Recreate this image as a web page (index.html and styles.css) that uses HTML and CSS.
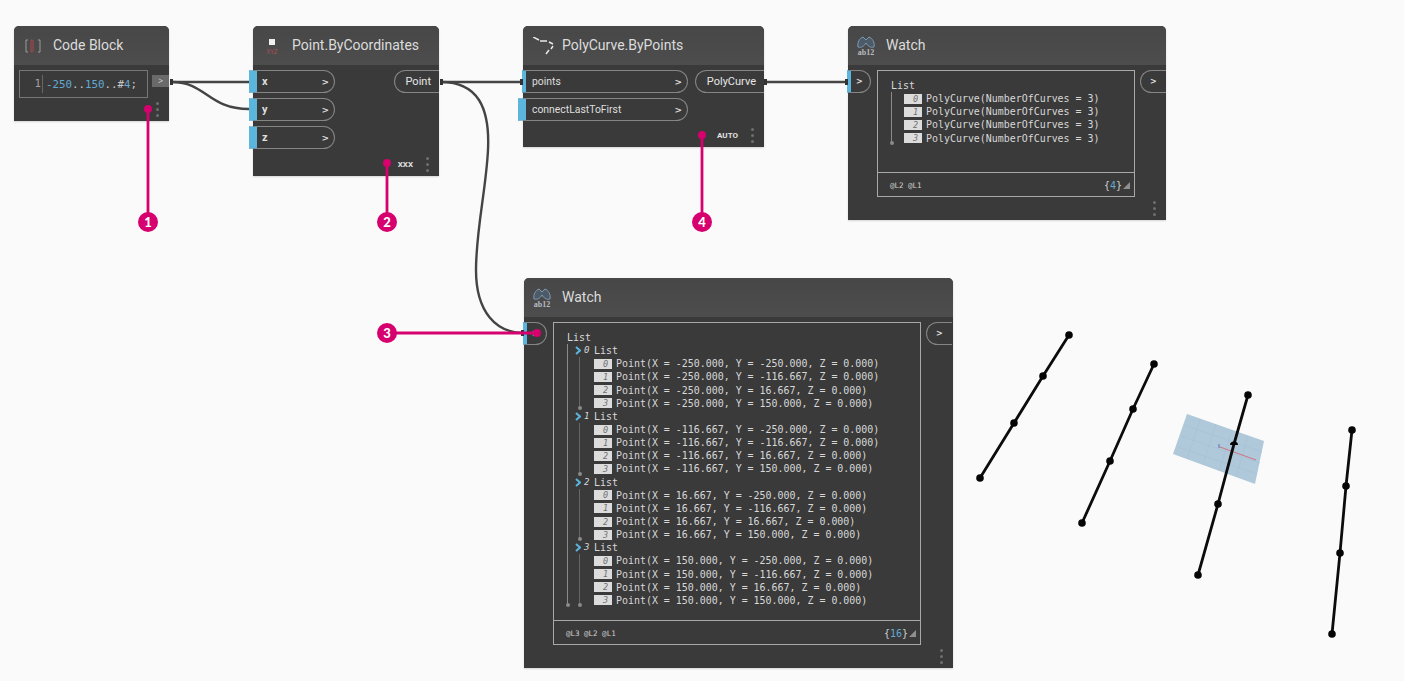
FILE: index.html
```html
<!DOCTYPE html>
<html lang="en">

<head>
    <meta charset="UTF-8" />
    <title>PolyCurve.ByPoints graph</title>
    <link rel="stylesheet" href="styles.css">
</head>

<body>
    <div class="canvas">

        <!-- background preview geometry -->
        <svg class="layer" width="1404" height="681" viewBox="0 0 1404 681">
            <polygon class="plane" points="1187,414 1264,441 1255,484 1173,454" />
            <path class="plane-grid" d="M1184,425 L1262,452 M1181,436 L1260,463 M1178,447 L1257,474 M1200,419 L1187,459 M1216,424 L1203,465 M1232,430 L1219,471 M1248,436 L1236,477" />
            <line class="axis-red" x1="1220" y1="447" x2="1256" y2="460" />
            <line class="axis-blue" x1="1219" y1="444" x2="1219" y2="448" />
            <polyline class="curve" points="1069,335 1043,376 1014,423 980,478" />
            <circle class="vertex" cx="1069" cy="335" r="3.8" /><circle class="vertex" cx="1043" cy="376" r="3.8" />
            <circle class="vertex" cx="1014" cy="423" r="3.8" /><circle class="vertex" cx="980" cy="478" r="3.8" />
            <polyline class="curve" points="1154,364 1133,409 1110,461 1082,523" />
            <circle class="vertex" cx="1154" cy="364" r="3.8" /><circle class="vertex" cx="1133" cy="409" r="3.8" />
            <circle class="vertex" cx="1110" cy="461" r="3.8" /><circle class="vertex" cx="1082" cy="523" r="3.8" />
            <polyline class="curve" points="1248,395 1234,444 1218,504 1198,575" />
            <circle class="vertex" cx="1248" cy="395" r="3.8" /><path class="vertex" d="M1230,445 A4,3.5 0 0 1 1238,445 Z" />
            <circle class="vertex" cx="1218" cy="504" r="3.8" /><circle class="vertex" cx="1198" cy="575" r="3.8" />
            <polyline class="curve" points="1352,430 1346,486 1340,553 1332,634" />
            <circle class="vertex" cx="1352" cy="430" r="3.8" /><circle class="vertex" cx="1346" cy="486" r="3.8" />
            <circle class="vertex" cx="1340" cy="553" r="3.8" /><circle class="vertex" cx="1332" cy="634" r="3.8" />
        </svg>

        <div class="node node-code">
            <div class="node-head">
                <svg class="icon-code" width="16" height="14" viewBox="0 0 16 14">
                    <path class="ic-grey" d="M3,1 H1 V13 H3 M13,1 H15 V13 H13" />
                    <path class="ic-red" d="M7.5,1 H6 V13 H7.5 M8,1 V13" />
                </svg>
                <span class="node-title">Code Block</span>
            </div>
            <div class="node-body">
                <div class="code-box">
                    <span class="line-no">1</span>
                    <span class="code-text"><b>-250</b>..<b>150</b>..#<b>4</b>;</span>
                </div>
                <div class="code-out">&gt;</div>
            </div>
            <div class="node-foot"><span class="grip"><i></i><i></i><i></i></span></div>
        </div>

        <div class="node node-point">
            <div class="node-head">
                <div class="icon-point"><i></i><span>XYZ</span></div>
                <span class="node-title">Point.ByCoordinates</span>
            </div>
            <div class="node-body split">
                <div class="inputs">
                    <div class="in-port"><span>x</span><em>&gt;</em></div>
                    <div class="in-port"><span>y</span><em>&gt;</em></div>
                    <div class="in-port"><span>z</span><em>&gt;</em></div>
                </div>
                <div class="out-port">Point</div>
            </div>
            <div class="node-foot"><span class="lacing">XXX</span><span class="grip"><i></i><i></i><i></i></span></div>
        </div>

        <div class="node node-poly">
            <div class="node-head">
                <svg class="icon-poly" width="22" height="18" viewBox="0 0 22 18">
                    <path class="ic-dash" d="M0,0 L6,3 M7,4 H14 M16,5 L20,7 M20,9 L18,12 M16,13 L13,17" />
                </svg>
                <span class="node-title">PolyCurve.ByPoints</span>
            </div>
            <div class="node-body split">
                <div class="inputs">
                    <div class="in-port in-short"><span>points</span><em>&gt;</em></div>
                    <div class="in-port in-long"><span>connectLastToFirst</span><em>&gt;</em></div>
                </div>
                <div class="out-port">PolyCurve</div>
            </div>
            <div class="node-foot"><span class="lacing">AUTO</span><span class="grip"><i></i><i></i><i></i></span></div>
        </div>

        <div class="node node-watch-top">
            <div class="node-head">
                <div class="icon-watch">
                    <svg width="18" height="13" viewBox="0 0 18 13">
                        <path class="ic-blue" d="M1,11 C0,6 3,2 6,1 L9,4 L12,1 C15,2 18,6 17,11 C13,12 11,10 9,7 C7,10 5,12 1,11 Z" />
                    </svg>
                    <span>ab12</span>
                </div>
                <span class="node-title">Watch</span>
            </div>
            <div class="node-body watch-body">
                <div class="watch-in">&gt;</div>
                <div class="watch-box">
                    <div class="watch-list">
                        <div class="list-title">List</div>
                        <div class="tree">
                            <div class="row"><span class="tag">0</span>PolyCurve(NumberOfCurves = 3)</div>
                            <div class="row"><span class="tag">1</span>PolyCurve(NumberOfCurves = 3)</div>
                            <div class="row"><span class="tag">2</span>PolyCurve(NumberOfCurves = 3)</div>
                            <div class="row"><span class="tag">3</span>PolyCurve(NumberOfCurves = 3)</div>
                        </div>
                    </div>
                    <div class="watch-foot">
                        <span class="levels">@L2 @L1</span>
                        <span class="count">{<b>4</b>}<i class="resize"></i></span>
                    </div>
                </div>
                <div class="watch-out">&gt;</div>
            </div>
            <div class="node-foot"><span class="grip"><i></i><i></i><i></i></span></div>
        </div>

        <div class="node node-watch-big">
            <div class="node-head">
                <div class="icon-watch">
                    <svg width="18" height="13" viewBox="0 0 18 13">
                        <path class="ic-blue" d="M1,11 C0,6 3,2 6,1 L9,4 L12,1 C15,2 18,6 17,11 C13,12 11,10 9,7 C7,10 5,12 1,11 Z" />
                    </svg>
                    <span>ab12</span>
                </div>
                <span class="node-title">Watch</span>
            </div>
            <div class="node-body watch-body">
                <div class="watch-in">&gt;</div>
                <div class="watch-box">
                    <div class="watch-list">
                        <div class="list-title">List</div>
                        <div class="tree tree-outer">
                            <div class="sub-title"><svg class="chev" width="6" height="9" viewBox="0 0 6 9"><path d="M1,1 L5,4.5 L1,8" /></svg><i>0</i>List</div>
                            <div class="tree tree-inner">
                                <div class="row"><span class="tag">0</span>Point(X = -250.000, Y = -250.000, Z = 0.000)</div>
                                <div class="row"><span class="tag">1</span>Point(X = -250.000, Y = -116.667, Z = 0.000)</div>
                                <div class="row"><span class="tag">2</span>Point(X = -250.000, Y = 16.667, Z = 0.000)</div>
                                <div class="row"><span class="tag">3</span>Point(X = -250.000, Y = 150.000, Z = 0.000)</div>
                            </div>
                            <div class="sub-title"><svg class="chev" width="6" height="9" viewBox="0 0 6 9"><path d="M1,1 L5,4.5 L1,8" /></svg><i>1</i>List</div>
                            <div class="tree tree-inner">
                                <div class="row"><span class="tag">0</span>Point(X = -116.667, Y = -250.000, Z = 0.000)</div>
                                <div class="row"><span class="tag">1</span>Point(X = -116.667, Y = -116.667, Z = 0.000)</div>
                                <div class="row"><span class="tag">2</span>Point(X = -116.667, Y = 16.667, Z = 0.000)</div>
                                <div class="row"><span class="tag">3</span>Point(X = -116.667, Y = 150.000, Z = 0.000)</div>
                            </div>
                            <div class="sub-title"><svg class="chev" width="6" height="9" viewBox="0 0 6 9"><path d="M1,1 L5,4.5 L1,8" /></svg><i>2</i>List</div>
                            <div class="tree tree-inner">
                                <div class="row"><span class="tag">0</span>Point(X = 16.667, Y = -250.000, Z = 0.000)</div>
                                <div class="row"><span class="tag">1</span>Point(X = 16.667, Y = -116.667, Z = 0.000)</div>
                                <div class="row"><span class="tag">2</span>Point(X = 16.667, Y = 16.667, Z = 0.000)</div>
                                <div class="row"><span class="tag">3</span>Point(X = 16.667, Y = 150.000, Z = 0.000)</div>
                            </div>
                            <div class="sub-title"><svg class="chev" width="6" height="9" viewBox="0 0 6 9"><path d="M1,1 L5,4.5 L1,8" /></svg><i>3</i>List</div>
                            <div class="tree tree-inner">
                                <div class="row"><span class="tag">0</span>Point(X = 150.000, Y = -250.000, Z = 0.000)</div>
                                <div class="row"><span class="tag">1</span>Point(X = 150.000, Y = -116.667, Z = 0.000)</div>
                                <div class="row"><span class="tag">2</span>Point(X = 150.000, Y = 16.667, Z = 0.000)</div>
                                <div class="row"><span class="tag">3</span>Point(X = 150.000, Y = 150.000, Z = 0.000)</div>
                            </div>
                        </div>
                    </div>
                    <div class="watch-foot">
                        <span class="levels">@L3 @L2 @L1</span>
                        <span class="count">{<b>16</b>}<i class="resize"></i></span>
                    </div>
                </div>
                <div class="watch-out">&gt;</div>
            </div>
            <div class="node-foot"><span class="grip"><i></i><i></i><i></i></span></div>
        </div>

        <!-- wires and callouts sit over the nodes -->
        <svg class="layer" width="1404" height="681" viewBox="0 0 1404 681">
            <path class="wire" d="M172,82 H249" />
            <path class="wire" d="M172,82 C206,82 208,109 249,109" />
            <path class="wire" d="M441,82 H523" />
            <path class="wire" d="M441,82 C478,82 490,108 488,150 C486,190 476,230 476,270 C476,312 496,333 524,333" />
            <path class="wire" d="M766,82 H848" />
            <rect class="cap" x="170" y="79" width="3" height="6" />
            <rect class="cap" x="440" y="79" width="3" height="6" />
            <rect class="cap" x="764" y="79" width="3" height="6" />
            <rect class="cap" x="520" y="79" width="3" height="6" />
            <rect class="cap" x="845" y="79" width="3" height="6" />
            <rect class="cap" x="521" y="330" width="3" height="6" />

            <path class="call" d="M148,109 V222" />
            <path class="call" d="M387,163 V222" />
            <path class="call" d="M702,135 V222" />
            <path class="call" d="M387,333 H537" />
            <circle class="call-dot" cx="148" cy="109" r="4" />
            <circle class="call-dot" cx="387" cy="163" r="4" />
            <circle class="call-dot" cx="702" cy="135" r="4" />
            <circle class="call-dot" cx="537" cy="333" r="4" />
        </svg>

        <div class="badge badge-1">1</div>
        <div class="badge badge-2">2</div>
        <div class="badge badge-3">3</div>
        <div class="badge badge-4">4</div>
    </div>
</body>

</html>
```
FILE: styles.css
```css
body {
    margin: 0;
    background: #fafafa;
    font-family: "Open Sans", Arial, sans-serif;
}

.canvas {
    position: relative;
    width: 1404px;
    height: 681px;
    overflow: hidden;
}

.layer {
    position: absolute;
    left: 0;
    top: 0;
}

/* preview geometry */
.plane {
    fill: #afc9da;
}

.plane-grid {
    fill: none;
    stroke: #a3bfd2;
    stroke-width: 0.5;
}

.axis-red {
    stroke: #d0707e;
    stroke-width: 1;
}

.axis-blue {
    stroke: #5a6fc0;
    stroke-width: 1;
}

.curve {
    fill: none;
    stroke: #0c0c0c;
    stroke-width: 2.8;
}

.vertex {
    fill: #050505;
}

/* nodes */
.node {
    position: absolute;
    display: flex;
    flex-direction: column;
    background: #3a3a3a;
    border-radius: 5px 5px 0 0;
    box-shadow: 0 1px 2px rgba(0, 0, 0, 0.15);
}

.node-code {
    left: 14px;
    top: 26px;
    width: 155px;
    height: 95px;
}

.node-point {
    left: 253px;
    top: 26px;
    width: 186px;
    height: 150px;
}

.node-poly {
    left: 523px;
    top: 26px;
    width: 241px;
    height: 121px;
}

.node-watch-top {
    left: 848px;
    top: 26px;
    width: 318px;
    height: 194px;
}

.node-watch-big {
    left: 524px;
    top: 278px;
    width: 429px;
    height: 390px;
}

.node-head {
    display: flex;
    align-items: center;
    height: 39px;
    flex: none;
    box-sizing: border-box;
    padding-left: 9px;
    gap: 11px;
    background: linear-gradient(#474747, #4d4d4d);
    border-radius: 5px 5px 0 0;
}

.node-code .node-head {
    padding-left: 11px;
    gap: 12px;
}

.node-point .node-head {
    padding-left: 12px;
    gap: 13px;
}

.node-poly .node-head {
    padding-left: 10px;
    gap: 7px;
}

.node-title {
    padding-bottom: 2px;
    font-family: Roboto, Arial, sans-serif;
    font-size: 14px;
    color: #dcdcdc;
}

.node-body {
    display: flex;
    flex: 1;
    min-height: 0;
    padding-top: 5px;
}

.split {
    justify-content: space-between;
    align-items: flex-start;
}

.node-foot {
    display: flex;
    justify-content: flex-end;
    align-items: center;
    gap: 13px;
    flex: none;
    height: 23px;
    padding-right: 10px;
}

.grip {
    display: flex;
    flex-direction: column;
    gap: 3px;
}

.grip i {
    display: block;
    width: 3px;
    height: 3px;
    border-radius: 50%;
    background: #6f6f6f;
}

.lacing {
    font-family: Roboto, Arial, sans-serif;
    font-size: 8px;
    font-weight: 700;
    color: #e2e2e2;
}

/* icons */
.ic-grey {
    fill: none;
    stroke: #9a9a9a;
    stroke-width: 1;
}

.ic-red {
    fill: none;
    stroke: #a8474f;
    stroke-width: 1;
}

.ic-dash {
    fill: none;
    stroke: #e8e8e8;
    stroke-width: 1.5;
}

.ic-blue {
    fill: #4d5a68;
    stroke: #7f9ab4;
    stroke-width: 1;
}

.icon-point {
    display: flex;
    flex-direction: column;
    align-items: center;
    gap: 4px;
    width: 14px;
    padding-top: 3px;
}

.icon-point i {
    width: 6px;
    height: 6px;
    background: #f0f0f0;
}

.icon-point span {
    font-size: 6.5px;
    line-height: 6px;
    color: #b0505a;
}

.icon-watch {
    display: flex;
    flex-direction: column;
    align-items: center;
    width: 18px;
}

.icon-watch span {
    font-family: "Liberation Serif", serif;
    font-size: 8px;
    line-height: 7px;
    font-weight: 700;
    color: #b9bcc0;
}

/* code block */
.code-box {
    display: flex;
    align-items: center;
    width: 129px;
    height: 28px;
    box-sizing: border-box;
    margin-left: 5px;
    border: 1px solid #777;
    font-family: "DejaVu Sans Mono", monospace;
    font-size: 10.8px;
    color: #c8c8c8;
}

.line-no {
    width: 23px;
    box-sizing: border-box;
    padding-right: 1px;
    text-align: right;
    border-right: 1px solid #666;
    line-height: 18px;
    color: #a0a0a0;
}

.code-text {
    padding-left: 3px;
}

.code-text b {
    font-weight: 400;
    color: #62a9d3;
}

.code-out {
    width: 17px;
    height: 12px;
    margin: 5px 0 0 4px;
    background: #6a6a6a;
    color: #d8d8d8;
    font-size: 9px;
    line-height: 12px;
    text-align: center;
}

/* ports */
.inputs {
    display: flex;
    flex-direction: column;
    gap: 5px;
}

.in-port {
    display: flex;
    justify-content: space-between;
    align-items: center;
    width: 86px;
    height: 23px;
    box-sizing: border-box;
    margin-left: -4px;
    padding: 0 5px 0 5px;
    border: 1px solid #858585;
    border-left: 8px solid #5cb5dd;
    border-radius: 0 12px 12px 0;
    font-family: Roboto, Arial, sans-serif;
    font-size: 11px;
    font-weight: 500;
    color: #dedede;
}

.in-port span {
    font-weight: 700;
}

.in-port em {
    font-family: "DejaVu Sans", sans-serif;
    font-style: normal;
    font-size: 9px;
    font-weight: 700;
}

.in-short,
.in-long {
    width: 170px;
    padding-left: 6px;
    font-size: 10.4px;
}

.in-short span,
.in-long span {
    font-weight: 400;
}

.in-short {
    margin-left: -1px;
    border-left-width: 4px;
    width: 166px;
}

.in-long {
    margin-left: -5px;
    border-left-width: 8px;
}

.out-port {
    height: 23px;
    box-sizing: border-box;
    padding: 0 8px 0 11px;
    border: 1px solid #858585;
    border-right: none;
    border-radius: 12px 0 0 12px;
    font-family: Roboto, Arial, sans-serif;
    font-size: 11px;
    font-weight: 400;
    line-height: 22px;
    color: #e6e6e6;
}

/* watch */
.watch-body {
    align-items: flex-start;
}

.watch-in {
    width: 24px;
    height: 23px;
    flex: none;
    box-sizing: border-box;
    margin-left: -1px;
    padding-left: 5px;
    border: 1px solid #858585;
    border-left: 4px solid #5cb5dd;
    border-radius: 0 12px 12px 0;
    font-family: "DejaVu Sans", sans-serif;
    font-size: 8px;
    font-weight: 700;
    line-height: 21px;
    color: #e0e0e0;
}

.watch-out {
    width: 26px;
    height: 23px;
    flex: none;
    box-sizing: border-box;
    margin-left: 5px;
    padding-left: 9px;
    border: 1px solid #858585;
    border-right: none;
    border-radius: 12px 0 0 12px;
    font-family: "DejaVu Sans", sans-serif;
    font-size: 8px;
    font-weight: 700;
    line-height: 21px;
    color: #e0e0e0;
}

.watch-box {
    display: flex;
    flex-direction: column;
    flex: none;
    box-sizing: border-box;
    margin-left: 6px;
    border: 1px solid #a8a8a8;
    font-family: "DejaVu Sans Mono", monospace;
    font-size: 9.95px;
    color: #d8d8d8;
}

.node-watch-top .watch-box {
    width: 258px;
    height: 127px;
}

.node-watch-big .watch-box {
    width: 368px;
    height: 323px;
}

.watch-list {
    flex: 1;
    padding: 8px 0 0 13px;
}

.list-title,
.sub-title,
.row {
    display: flex;
    align-items: center;
    height: 13.15px;
    line-height: 13.15px;
    white-space: pre;
}

.tree {
    position: relative;
    padding-left: 13px;
}

.tree::before {
    content: "";
    position: absolute;
    left: 0;
    top: 0;
    bottom: 1px;
    border-left: 1px solid #8a8a8a;
}

.tree::after {
    content: "";
    position: absolute;
    left: -1px;
    bottom: 0;
    width: 4px;
    height: 4px;
    border-radius: 50%;
    background: #8a8a8a;
}

.tree-outer {
    padding-left: 8px;
}

.tree-inner {
    margin-left: 4px;
    padding-left: 15px;
}

.tree-inner::before {
    border-left-color: #666;
}

.sub-title i {
    width: 9px;
    margin: 0 1px 0 3px;
    font-size: 9px;
    font-family: "DejaVu Sans Mono", monospace;
    font-style: italic;
}

.chev {
    flex: none;
}

.chev path {
    fill: none;
    stroke: #5cb5dd;
    stroke-width: 2;
}

.tag {
    flex: none;
    width: 18px;
    height: 10px;
    margin-right: 4px;
    box-sizing: border-box;
    padding-right: 4px;
    background: #dcdcdc;
    font-size: 8.5px;
    font-style: italic;
    line-height: 10px;
    text-align: right;
    color: #707070;
}

.watch-foot {
    display: flex;
    justify-content: space-between;
    align-items: center;
    flex: none;
    height: 24px;
    padding: 1px 4px 0 12px;
    box-sizing: border-box;
    border-top: 1px solid #a8a8a8;
}

.levels {
    font-size: 7.5px;
    color: #cfcfcf;
}

.count {
    display: flex;
    align-items: center;
    font-size: 10px;
    color: #cfcfcf;
}

.count b {
    font-weight: 400;
    color: #62a9d3;
}

.resize {
    width: 0;
    height: 0;
    margin-left: 1px;
    border-left: 7px solid transparent;
    border-bottom: 7px solid #8f8f8f;
}

/* wires and callouts */
.wire {
    fill: none;
    stroke: #444;
    stroke-width: 2.4;
}

.cap {
    fill: #333;
}

.call {
    fill: none;
    stroke: #d6006e;
    stroke-width: 2.8;
}

.call-dot {
    fill: #d6006e;
}

.badge {
    position: absolute;
    width: 20px;
    height: 20px;
    border-radius: 50%;
    background: #d6006e;
    color: #fff;
    font-family: Lato, Arial, sans-serif;
    font-size: 13px;
    font-weight: 900;
    line-height: 20px;
    text-align: center;
}

.badge-1 {
    left: 138px;
    top: 212px;
}

.badge-2 {
    left: 377px;
    top: 212px;
}

.badge-3 {
    left: 377px;
    top: 323px;
}

.badge-4 {
    left: 692px;
    top: 212px;
}
```
